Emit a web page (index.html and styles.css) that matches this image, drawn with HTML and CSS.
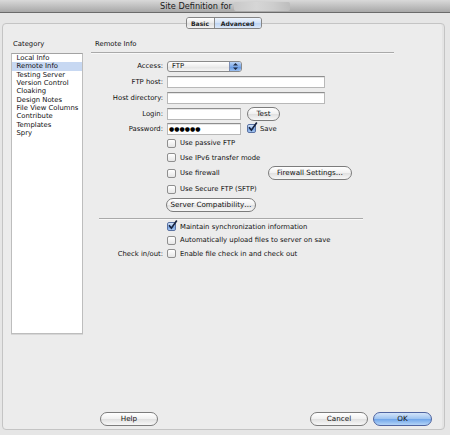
FILE: index.html
```html
<!DOCTYPE html>
<html lang="en">
<head>
  <meta charset="UTF-8" />
  <title>Site Definition</title>
  <link rel="stylesheet" href="styles.css">
</head>
<body>
  <div class="window">

    <!-- TITLE BAR -->
    <div class="titlebar">
      <span class="title">Site Definition for</span>
      <span class="title-site"></span>
    </div>

    <div class="window-body">
      <div class="tabs">
        <span class="tab">Basic</span>
        <span class="tab active">Advanced</span>
      </div>

      <div class="panel">
        <div class="columns">

          <!-- CATEGORY LIST -->
          <div class="category">
            <div class="category-title">Category</div>
            <ul class="category-list">
              <li>Local Info</li>
              <li class="selected">Remote Info</li>
              <li>Testing Server</li>
              <li>Version Control</li>
              <li>Cloaking</li>
              <li>Design Notes</li>
              <li>File View Columns</li>
              <li>Contribute</li>
              <li>Templates</li>
              <li>Spry</li>
            </ul>
          </div>

          <!-- REMOTE INFO -->
          <div class="details">
            <div class="details-title">Remote Info</div>

            <div class="form">
              <div class="label">Access:</div>
              <div class="select">
                <span class="select-value">FTP</span>
                <span class="stepper">
                  <svg width="5" height="7" viewBox="0 0 5 7"><path d="M2.5 0 L5 2.6 L0 2.6 Z M2.5 7 L5 4.4 L0 4.4 Z" fill="#1d2a44"/></svg>
                </span>
              </div>

              <div class="label">FTP host:</div>
              <div><input class="field wide" type="text"></div>

              <div class="label">Host directory:</div>
              <div><input class="field wide" type="text"></div>

              <div class="label">Login:</div>
              <div class="inline">
                <input class="field short" type="text">
                <button class="btn btn-test">Test</button>
              </div>

              <div class="label">Password:</div>
              <div class="inline">
                <div class="field short password">●●●●●●</div>
                <label class="checkline"><span class="check on"><svg width="11" height="11" viewBox="0 0 11 11"><path d="M2 5.2 L4.4 8.2 L9.8 0.6" fill="none" stroke="#17233f" stroke-width="1.7"/></svg></span>Save</label>
              </div>

              <label class="checkline col2"><span class="check"></span>Use passive FTP</label>
              <label class="checkline col2"><span class="check"></span>Use IPv6 transfer mode</label>
              <div class="col2 firewall">
                <label class="checkline"><span class="check"></span>Use firewall</label>
                <button class="btn btn-firewall">Firewall Settings…</button>
              </div>
              <label class="checkline col2"><span class="check"></span>Use Secure FTP (SFTP)</label>
              <div class="col2"><button class="btn btn-compat">Server Compatibility…</button></div>
            </div>

            <div class="separator"></div>

            <div class="form form-sync">
              <label class="checkline col2"><span class="check on"><svg width="11" height="11" viewBox="0 0 11 11"><path d="M2 5.2 L4.4 8.2 L9.8 0.6" fill="none" stroke="#17233f" stroke-width="1.7"/></svg></span>Maintain synchronization information</label>
              <label class="checkline col2"><span class="check"></span>Automatically upload files to server on save</label>
              <div class="label">Check in/out:</div>
              <label class="checkline"><span class="check"></span>Enable file check in and check out</label>
            </div>
          </div>
        </div>

        <!-- DIALOG BUTTONS -->
        <div class="actions">
          <button class="btn btn-dialog">Help</button>
          <button class="btn btn-dialog btn-cancel">Cancel</button>
          <button class="btn btn-dialog btn-ok">OK</button>
        </div>
      </div>
    </div>
  </div>
</body>
</html>
```

FILE: styles.css
```css
* { box-sizing: border-box; }

body {
  margin: 0;
  width: 450px;
  height: 435px;
  overflow: hidden;
  background: #e6e6e6;
  color: #111;
  font-family: "DejaVu Sans", Verdana, sans-serif;
  font-size: 6.85px;
}

.window {
  display: flex;
  flex-direction: column;
  height: 435px;
}

/* title bar */
.titlebar {
  height: 13px;
  flex: none;
  display: flex;
  justify-content: center;
  align-items: center;
  background: linear-gradient(#d9d9d9, #a8a8a8);
  border-bottom: 1px solid #6b6b6b;
  font-size: 8.2px;
  color: #1a1a1a;
}

.title-site {
  position: relative;
  width: 56px;
  height: 9px;
  margin-left: 2px;
  background: linear-gradient(90deg, #c9c9c9, #d6d6d6 40%, #cdcdcd 70%, #bdbdbd);
  border-radius: 2px;
}

.title-site::after {
  content: "";
  position: absolute;
  right: -5px;
  top: -3px;
  width: 6px;
  height: 1px;
  background: #f4f4f4;
}

.window-body {
  flex: 1;
  display: flex;
  flex-direction: column;
  padding: 4px 5px 0 2px;
}

/* segmented control */
.tabs {
  align-self: center;
  position: relative;
  z-index: 1;
  display: flex;
  height: 12px;
  margin-bottom: -6px;
  border: 1px solid #858585;
  border-radius: 3px;
  overflow: hidden;
  font-size: 6.1px;
  font-weight: bold;
  color: #222;
}

.tab {
  display: flex;
  align-items: center;
  justify-content: center;
  width: 27px;
  background: linear-gradient(#ffffff, #e9e9e9 50%, #dedede 51%, #f2f2f2);
}

.tab.active {
  width: 47px;
  border-left: 1px solid #8a8a8a;
  background: linear-gradient(#eef4fc, #d2e2f7 50%, #bcd3f2 51%, #dbe8f9);
}

/* main panel */
.panel {
  flex: 1;
  display: flex;
  flex-direction: column;
  margin-bottom: 5px;
  padding: 16px 0 3px 8px;
  background: #ececec;
  border: 1px solid #c4c4c4;
  border-radius: 4px;
  box-shadow: inset -2px 0 0 #e4e4e4;
}

.columns {
  display: flex;
  gap: 8px;
}

.category { width: 72px; }

.category-title {
  line-height: 9px;
  padding-left: 2px;
  margin-bottom: 4px;
}

.category-list {
  height: 281px;
  margin: 0;
  padding: 0;
  list-style: none;
  background: #fff;
  border: 1px solid #bdbdbd;
  border-top-color: #a3a3a3;
  box-shadow: 0 1px 0 #d6d6d6;
}

.category-list li {
  line-height: 8.35px;
  padding-left: 4.5px;
  white-space: nowrap;
}

.category-list li.selected { background: #c7d8f2; }

.details { width: 303px; }

.details-title {
  line-height: 9px;
  padding: 0 0 3px 4px;
  border-bottom: 1px solid #a9a9a9;
  box-shadow: 0 1px 0 #f8f8f8;
}

/* form grid */
.form {
  display: grid;
  grid-template-columns: 72px 1fr;
  grid-template-rows: 16px 16px 16px 15px 15px 14px 15px 16px 16px 15px;
  column-gap: 4px;
  align-items: center;
  margin-top: 5px;
}

.form-sync {
  grid-template-rows: 13px 14px 13px;
  margin-top: 1px;
}

.separator {
  width: 264px;
  height: 1px;
  margin: 6px 0 0 8px;
  background: #a9a9a9;
  box-shadow: 0 1px 0 #f8f8f8;
}

.label {
  text-align: right;
  white-space: nowrap;
}

.col2 { grid-column: 2; }

.inline {
  display: flex;
  align-items: center;
  gap: 6px;
}

.field {
  display: block;
  height: 12px;
  margin: 0;
  padding: 0 2px;
  background: #fff;
  border: 1px solid #b8b8b8;
  border-top-color: #8e8e8e;
  box-shadow: inset 0 1px 0 #e6e6e6;
  font: inherit;
}

.wide { width: 158px; }
.short { width: 74px; }

.password {
  font-size: 6px;
  line-height: 10px;
  color: #000;
  padding-left: 1px;
}

.select {
  display: flex;
  align-items: center;
  width: 75px;
  height: 11px;
  border: 1px solid #8a8a8a;
  border-radius: 3px;
  overflow: hidden;
  background: linear-gradient(#ffffff, #ededed 50%, #e2e2e2 51%, #f6f6f6);
}

.select-value {
  flex: 1;
  padding-left: 4px;
}

.stepper {
  display: flex;
  align-items: center;
  justify-content: center;
  width: 12px;
  height: 100%;
  border-left: 1px solid #7d8fb6;
  background: linear-gradient(#bcd4f5, #7eaae8 50%, #5d93e0 51%, #9dc1f1);
}

/* checkboxes */
.checkline {
  display: flex;
  align-items: center;
  gap: 4px;
  white-space: nowrap;
}

.check {
  position: relative;
  flex: none;
  width: 9px;
  height: 9px;
  border: 1px solid #8f8f8f;
  border-radius: 2px;
  background: linear-gradient(#ffffff, #e6e6e6);
}

.check.on {
  border-color: #5a72a3;
  background: linear-gradient(#d6e5f9, #8fb5ea 50%, #6c9de2 51%, #a9c8f1);
}

.check svg {
  position: absolute;
  left: -1px;
  top: -3px;
  overflow: visible;
}

.firewall {
  display: grid;
  grid-template-columns: 101px auto;
  align-items: center;
}

/* push buttons */
.btn {
  height: 14px;
  margin: 0;
  padding: 0;
  border: 1px solid #7c7c7c;
  border-radius: 7px;
  background: linear-gradient(#ffffff, #f0f0f0 50%, #e0e0e0 51%, #f7f7f7);
  color: #111;
  font-family: inherit;
  font-size: 7.2px;
  line-height: 12px;
  cursor: pointer;
}

.btn-test { width: 33px; }
.btn-firewall { width: 84px; }
.btn-compat { width: 90px; margin-left: -1px; }

.actions {
  display: flex;
  gap: 5px;
  margin-top: auto;
  padding: 0 12px 0 89px;
}

.btn-dialog { width: 58px; }
.btn-cancel { margin-left: auto; }

.btn-ok {
  width: 59px;
  border-color: #4f64a0;
  background: linear-gradient(#d4e5fa, #9cc2f0 50%, #6fa5ea 51%, #b4d4f7);
}
```
